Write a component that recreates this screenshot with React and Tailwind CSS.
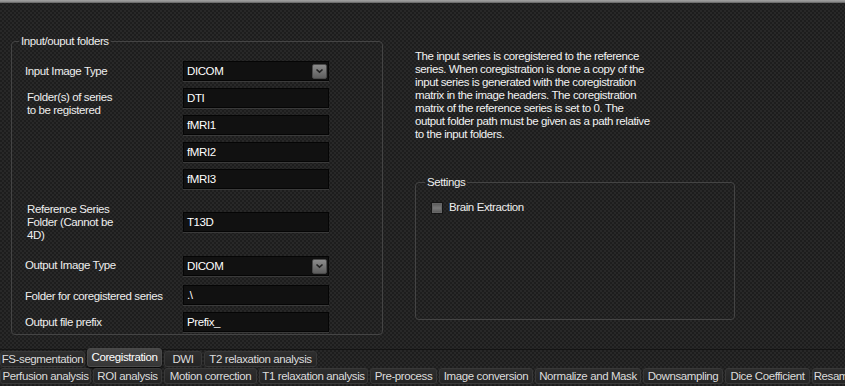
import React from "react";

const Chevron = () => (
  <svg width="9" height="6" viewBox="0 0 9 6" fill="none">
    <path d="M1.5 1.5 L4.5 4.2 L7.5 1.5" stroke="#222" strokeWidth="1.6" />
  </svg>
);

const Field = ({ value, select }) => (
  <div className="w-[146px] h-[20px] bg-[#111111] border border-[#050505] shadow-[0_1px_0_#3a3a3a] flex items-center pl-[3px] text-white">
    <span className="whitespace-nowrap">{value}</span>
    {select && (
      <div className="ml-auto mr-[1px] w-[15px] h-[15px] rounded-[2px] border border-[#4a4a4a] bg-[linear-gradient(#8c8c8c,#5e5e5e)] flex items-center justify-center">
        <Chevron />
      </div>
    )}
  </div>
);

const Tab = ({ label, w, selected }) => (
  <div
    className={
      selected
        ? "h-[19px] rounded-[3px] border border-[#4a4a4a] bg-[linear-gradient(#474747,#363636)] text-white flex items-center justify-center whitespace-nowrap shrink-0 shadow-[0_1px_2px_#000]"
        : "h-[16px] rounded-[3px] border border-[#383838] bg-[linear-gradient(#2e2e2e,#242424)] text-[#dcdcdc] flex items-center justify-center whitespace-nowrap shrink-0"
    }
    style={{ width: w }}
  >
    {label}
  </div>
);

export default function App() {
  const row1 = [
    ["FS-segmentation", 85],
    ["Coregistration", 75, true],
    ["DWI", 38],
    ["T2 relaxation analysis", 113],
  ];
  const row2 = [
    ["Perfusion analysis", 91],
    ["ROI analysis", 69],
    ["Motion correction", 93],
    ["T1 relaxation analysis", 109],
    ["Pre-process", 67],
    ["Image conversion", 94],
    ["Normalize and Mask", 106],
    ["Downsampling", 80],
    ["Dice Coefficient", 85],
    ["Resampling", 60],
  ];
  return (
    <div className="w-[845px] h-[386px] overflow-hidden flex flex-col text-[11.5px] leading-[13px] tracking-[-0.4px] text-[#eeeeee] bg-[#222222] bg-[repeating-conic-gradient(#282828_0%_25%,#1d1d1d_0%_50%)] bg-[length:4px_4px] font-['Liberation_Sans',Arial,sans-serif]">
      <div className="h-[3px] shrink-0 bg-[linear-gradient(#a2a2a2,#8a8a8a_60%,#5a5a5a)]" />
      <div className="h-[346px] shrink-0 flex">
        {/* Left group */}
        <fieldset className="ml-[11px] mt-[32px] w-[372px] h-[300px] border border-[#444444] rounded-[4px] p-0 min-w-0">
          <legend className="ml-[7px] px-[2px] leading-[13px]">Input/ouput folders</legend>
          <div className="pl-[13px] pt-[13px] flex flex-col">
            <div className="flex items-center">
              <div className="w-[158px]">Input Image Type</div>
              <Field value="DICOM" select />
            </div>
            <div className="flex items-start mt-[7px]">
              <div className="w-[158px] pl-[2px] pt-[3px]">
                Folder(s) of series
                <br />
                to be registered
              </div>
              <div className="flex flex-col gap-[7px]">
                <Field value="DTI" />
                <Field value="fMRI1" />
                <Field value="fMRI2" />
                <Field value="fMRI3" />
              </div>
            </div>
            <div className="flex items-start mt-[14px]">
              <div className="w-[158px] pl-[2px]">
                Reference Series
                <br />
                Folder (Cannot be
                <br />
                4D)
              </div>
              <div className="mt-[9px]">
                <Field value="T13D" />
              </div>
            </div>
            <div className="flex items-center mt-[14px]">
              <div className="w-[158px] pb-[1px]">Output Image Type</div>
              <Field value="DICOM" select />
            </div>
            <div className="flex items-center mt-[9px]">
              <div className="w-[158px] pt-[3px]">Folder for coregistered series</div>
              <Field value=".\" />
            </div>
            <div className="flex items-center mt-[7px]">
              <div className="w-[158px] pt-[1px]">Output file prefix</div>
              <Field value="Prefix_" />
            </div>
          </div>
        </fieldset>

        {/* Right column */}
        <div className="ml-[32px] pt-[47px] flex flex-col">
          <div className="whitespace-nowrap text-[#f2f2f2]">
            The input series is coregistered to the reference
            <br />
            series. When coregistration is done a copy of the
            <br />
            input series is generated with the coregistration
            <br />
            matrix in the image headers. The coregistration
            <br />
            matrix of the reference series is set to 0. The
            <br />
            output folder path must be given as a path relative
            <br />
            to the input folders.
          </div>
          <fieldset className="mt-[35px] w-[320px] h-[144px] border border-[#444444] rounded-[4px] p-0 min-w-0">
            <legend className="ml-[9px] px-[2px] leading-[13px]">Settings</legend>
            <div className="pl-[15px] pt-[12px] flex items-center gap-[6px]">
              <div className="w-[12px] h-[12px] border border-[#161616] bg-[linear-gradient(#555555,#7a7a7a_50%,#555555)] shadow-[inset_0_0_0_1px_#666666]" />
              <span>Brain Extraction</span>
            </div>
          </fieldset>
        </div>
      </div>

      {/* Tabs */}
      <div className="flex-1 border-t border-[#141414] pt-[1px] flex flex-col gap-[1px]">
        <div className="h-[16px] flex items-end gap-[2px]">
          {row1.map(([l, w, s]) => (
            <Tab key={l} label={l} w={w} selected={s} />
          ))}
        </div>
        <div className="h-[16px] flex items-end gap-[2px]">
          {row2.map(([l, w]) => (
            <Tab key={l} label={l} w={w} />
          ))}
        </div>
      </div>
    </div>
  );
}
